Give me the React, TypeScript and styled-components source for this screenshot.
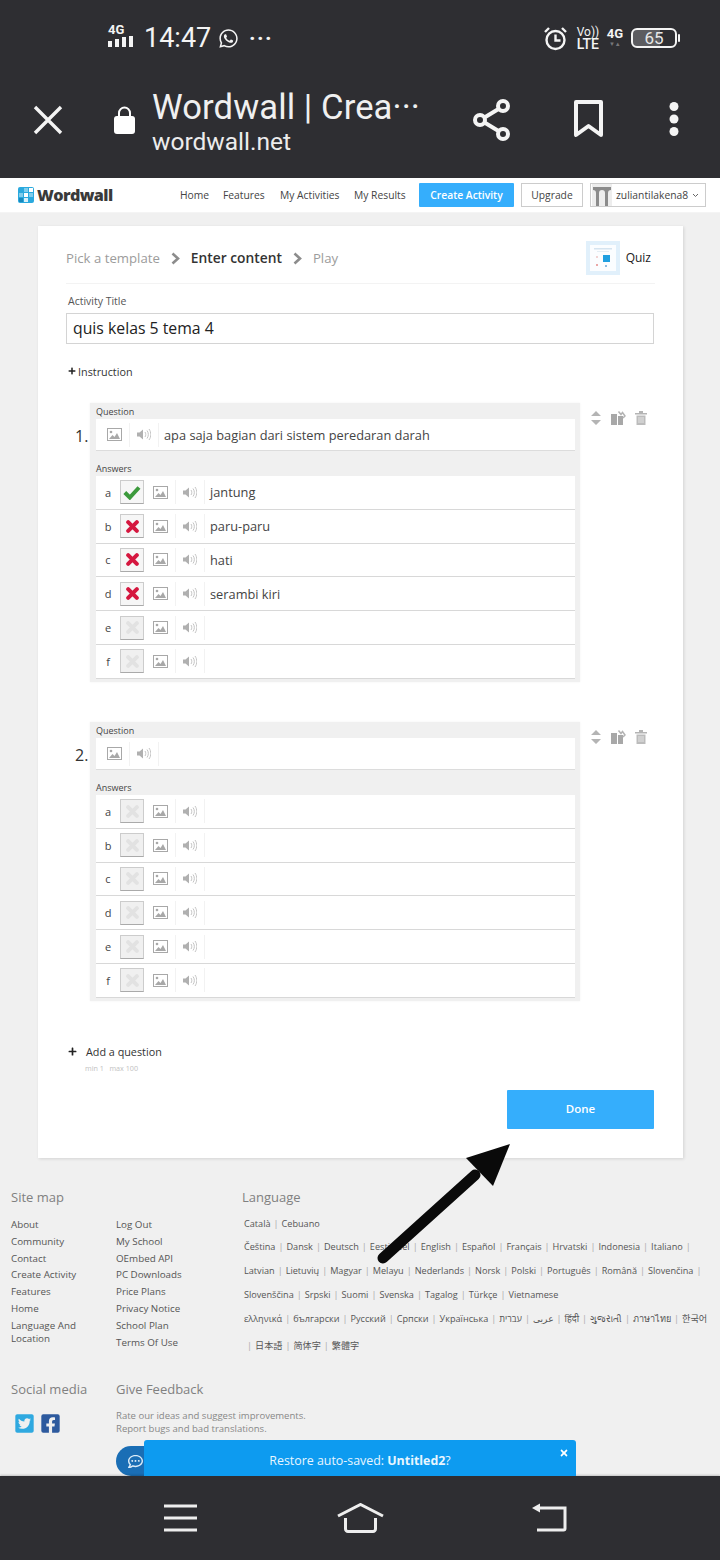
import React from 'react';
import styled, { createGlobalStyle } from 'styled-components';
import { FaTimes, FaWhatsapp, FaTwitterSquare, FaFacebookSquare, FaPlus, FaRegCommentDots } from 'react-icons/fa';

const Global = createGlobalStyle`
  html, body { margin: 0; padding: 0; background: #2e2e32; }
  * { box-sizing: border-box; }
  body { font-family: "Open Sans", "Noto Sans", "Noto Sans CJK JP", "DejaVu Sans", sans-serif; }
`;

const Screen = styled.div`
  position: relative;
  width: 720px;
  height: 1560px;
  overflow: hidden;
  display: flex;
  flex-direction: column;
  background: #f0f0f0;
`;

/* Phone + browser chrome */
const Chrome = styled.header`
  height: 178px;
  flex: none;
  background: #2e2e32;
  color: #f4f4f4;
  font-family: Roboto, "Liberation Sans", sans-serif;
  display: flex;
  flex-direction: column;
`;
const StatusBar = styled.div`
  height: 76px;
  display: flex;
  align-items: center;
  padding: 0 43px 0 108px;
`;
const Signal = styled.div`
  width: 30px;
  display: flex;
  flex-direction: column;
  gap: 0;
  margin-right: 7px;
  margin-top: -6px;
`;
const TinyBold = styled.span`
  font-size: 13px;
  line-height: 13px;
  font-weight: 700;
`;
const Bars = styled.div`
  display: flex;
  gap: 3px;
  align-items: flex-end;
`;
const Bar = styled.i<{ $h: number }>`
  display: block;
  width: 4px;
  height: ${p => p.$h}px;
  background: #f4f4f4;
`;
const Time = styled.span`
  font-size: 27px;
  line-height: 30px;
  width: 74px;
  margin-left: -1px;
`;
const Dots = styled.span`
  font-size: 22px;
  font-weight: 700;
  letter-spacing: 1.4px;
  margin: 0 0 0 10px;
`;
const Spacer = styled.div`
  flex: 1;
`;
const LteStack = styled.div`
  display: flex;
  flex-direction: column;
  align-items: flex-start;
  margin: 0 6px 0 9px;
  width: 24px;
`;
const VoLabel = styled.span`
  font-size: 12px;
  line-height: 12px;
`;
const LteLabel = styled.span`
  font-size: 14px;
  line-height: 13px;
  font-weight: 500;
`;
const NetStack = styled.div`
  display: flex;
  flex-direction: column;
  align-items: center;
  margin-right: 8px;
  margin-top: -2px;
`;
const NetArrows = styled.span`
  font-size: 6px;
  line-height: 7px;
  color: #77777b;
`;
const Battery = styled.div`
  position: relative;
  width: 46px;
  height: 20px;
  border: 2px solid #f4f4f4;
  border-radius: 6px;
  font-size: 17px;
  line-height: 16px;
  text-align: center;
  color: #e8e8e8;
  background: linear-gradient(90deg, #5c5c60 0 65%, transparent 65%);
  &::after {
    content: '';
    position: absolute;
    right: -5px;
    top: 4px;
    width: 2px;
    height: 8px;
    background: #f4f4f4;
    border-radius: 1px;
  }
`;
const BrowserBar = styled.div`
  flex: 1;
  display: flex;
  align-items: flex-start;
  padding: 11px 0 0 32px;
`;
const IconSlot = styled.div<{ $w: number; $top?: number }>`
  width: ${p => p.$w}px;
  flex: none;
  margin-top: ${p => p.$top ?? 16}px;
  display: flex;
`;
const TitleBlock = styled.div`
  width: 321px;
  flex: none;
  font-weight: 300;
`;
const PageTitle = styled.div`
  font-size: 34.6px;
  line-height: 40px;
  font-weight: 400;
  letter-spacing: 0.1px;
  color: #f0f0f0;
  white-space: nowrap;
`;
const PageUrl = styled.div`
  font-size: 24.5px;
  line-height: 30px;
  font-weight: 400;
  color: #ececec;
`;

/* Wordwall nav */
const Nav = styled.nav`
  height: 35px;
  flex: none;
  background: #fff;
  display: flex;
  align-items: center;
  padding: 0 14px 0 18px;
  font-size: 10.3px;
  color: #444;
  border-bottom: 1px solid #f4f4f4;
`;
const Logo = styled.div`
  display: flex;
  align-items: center;
  gap: 3px;
  width: 162px;
  font-weight: 800;
  font-size: 16.2px;
  letter-spacing: -0.6px;
  color: #3a3a3a;
`;
const NavLink = styled.span<{ $w: number }>`
  width: ${p => p.$w}px;
  flex: none;
  white-space: nowrap;
  margin-top: -1px;
`;
const CreateButton = styled.div`
  width: 95px;
  height: 24px;
  flex: none;
  background: #35aefc;
  color: #fff;
  font-weight: 600;
  font-size: 10.3px;
  display: flex;
  align-items: center;
  justify-content: center;
  margin-right: 7px;
  border-radius: 1px;
`;
const UpgradeButton = styled.div`
  width: 62px;
  height: 24px;
  flex: none;
  border: 1px solid #ccc;
  display: flex;
  align-items: center;
  justify-content: center;
  margin-right: 7px;
`;
const UserSelect = styled.div`
  width: 116px;
  height: 24px;
  flex: none;
  border: 1px solid #ccc;
  display: flex;
  align-items: center;
  padding: 0 4px 0 1px;
  gap: 4px;
  font-size: 10.3px;
  white-space: nowrap;
`;

/* Main card */
const Card = styled.main`
  width: 645px;
  height: 932px;
  flex: none;
  margin: 13px 0 0 38px;
  background: #fff;
  padding: 15px 28px 0;
  box-shadow: 1px 1px 3px rgba(0, 0, 0, 0.12);
  display: flex;
  flex-direction: column;
`;
const Steps = styled.div`
  height: 43px;
  flex: none;
  display: flex;
  align-items: flex-start;
  border-bottom: 1px solid #f3f3f3;
`;
const StepTrail = styled.div`
  height: 34px;
  flex: 1;
  display: flex;
  align-items: center;
`;
const Step = styled.span<{ $active?: boolean }>`
  color: ${p => (p.$active ? '#333' : '#9c9c9c')};
  font-weight: ${p => (p.$active ? 600 : 400)};
  font-size: ${p => (p.$active ? 13.8 : 13.2)}px;
  margin-top: ${p => (p.$active ? -1 : 0)}px;
`;
const Chevron = styled.svg`
  margin: 0 11px;
  flex: none;
`;
const TemplateThumb = styled.div`
  width: 34px;
  height: 34px;
  background: #fbfdff;
  border: 4px solid #e1f0fb;
  display: flex;
  align-items: center;
  justify-content: center;
  margin-right: 6px;
`;
const TemplateName = styled.span`
  height: 34px;
  line-height: 34px;
  font-size: 12px;
  color: #222;
  margin-right: 4px;
`;
const FieldLabel = styled.div`
  height: 29px;
  padding: 11px 0 0 2px;
  font-size: 10.5px;
  line-height: 13px;
  color: #555;
  flex: none;
`;
const TitleInput = styled.div`
  height: 31px;
  width: 588px;
  flex: none;
  border: 1px solid #d4d4d4;
  padding: 0 6px;
  font-size: 15.8px;
  line-height: 29px;
  font-weight: 500;
  color: #222;
`;
const AddRow = styled.div<{ $gap: number; $top: number }>`
  height: 16px;
  flex: none;
  display: flex;
  align-items: center;
  gap: ${p => p.$gap}px;
  margin: ${p => p.$top}px 0 0 2px;
  padding-bottom: 2px;
  font-size: 10.8px;
  color: #333;
`;
const QuestionList = styled.div`
  display: flex;
  flex-direction: column;
  gap: 40px;
  margin-top: 23px;
  flex: none;
`;
const Question = styled.section`
  display: flex;
  height: 279px;
`;
const Num = styled.div`
  width: 24px;
  flex: none;
  padding: 21px 0 0 9px;
  font-size: 16px;
  line-height: 24px;
  font-weight: 500;
  color: #333;
`;
const Block = styled.div`
  width: 490px;
  flex: none;
  background: #f0f0f0;
  padding: 0 5px 0 6px;
  box-shadow: 0 0 2px rgba(0, 0, 0, 0.06);
`;
const MiniLabel = styled.div<{ $h: number }>`
  height: ${p => p.$h}px;
  display: flex;
  align-items: flex-end;
  font-size: 9px;
  line-height: 12px;
  padding-bottom: 1px;
  color: #444;
`;
const QuestionInput = styled.div`
  height: 32px;
  background: #fff;
  border-bottom: 1px solid #dcdcdc;
  display: flex;
  align-items: center;
  font-size: 12.8px;
  color: #444;
`;
const AnswerRow = styled.div`
  height: 33.8px;
  background: #fff;
  border-bottom: 1px solid #d8d8d8;
  display: flex;
  align-items: center;
  font-size: 12.8px;
  color: #444;
`;
const Letter = styled.span`
  width: 24px;
  flex: none;
  text-align: center;
  font-size: 11px;
`;
const Toggle = styled.div<{ $state: 'ok' | 'bad' | 'off' }>`
  width: 24px;
  height: 24px;
  flex: none;
  border: 1px solid #ccc;
  border-bottom-color: #aaa;
  background: ${p => (p.$state === 'off' ? '#f0f0f0' : '#f6f6f6')};
  display: flex;
  align-items: center;
  justify-content: center;
  color: ${p => (p.$state === 'ok' ? '#3c9a3c' : p.$state === 'bad' ? '#d5173f' : '#e2e2e2')};
`;
const MediaCell = styled.div<{ $w: number; $shift?: number }>`
  width: ${p => p.$w}px;
  height: 24px;
  flex: none;
  display: flex;
  align-items: center;
  justify-content: center;
  padding-left: ${p => p.$shift ?? 0}px;
  border-right: 1px solid #f2f2f2;
`;
const Answer = styled.span`
  padding-left: 5px;
`;
const QuestionText = styled.span`
  padding-left: 5px;
`;
const Tools = styled.div`
  display: flex;
  gap: 9px;
  padding: 8px 0 0 10px;
  height: 28px;
  align-items: flex-start;
`;
const CountHint = styled.div`
  height: 16px;
  flex: none;
  padding-left: 19px;
  font-size: 7.2px;
  line-height: 16px;
  color: #c2c2c2;
`;
const DoneRow = styled.div`
  margin: 14px 1px 0 0;
  display: flex;
  justify-content: flex-end;
  flex: none;
`;
const DoneButton = styled.div`
  width: 147px;
  height: 39px;
  background: #35aefc;
  color: #fff;
  font-weight: 600;
  font-size: 11.5px;
  display: flex;
  align-items: center;
  justify-content: center;
  padding-bottom: 2px;
  border-radius: 1px;
`;

/* Footer */
const Footer = styled.footer`
  flex: 1;
  min-height: 0;
  padding: 30px 0 0 11px;
  color: #555;
`;
const FooterTop = styled.div`
  display: flex;
  height: 192px;
`;
const LinksColumn = styled.div`
  width: 231px;
  flex: none;
`;
const Heading = styled.div`
  font-size: 13px;
  line-height: 18px;
  color: #808080;
`;
const LinkColumns = styled.div`
  display: flex;
  margin-top: 12px;
`;
const LinkList = styled.div<{ $w: number }>`
  width: ${p => p.$w}px;
  flex: none;
  display: flex;
  flex-direction: column;
  gap: 3.8px;
`;
const FooterLink = styled.span`
  font-size: 9.8px;
  line-height: 13px;
  color: #555;
`;
const LangColumn = styled.div`
  flex: 1;
`;
const LangRows = styled.div`
  display: flex;
  flex-direction: column;
  margin-top: 11px;
`;
const LangRow = styled.div<{ $h: number }>`
  height: ${p => p.$h}px;
  display: flex;
  align-items: flex-start;
  white-space: nowrap;
  font-size: 9.15px;
  line-height: 14px;
  color: #555;
  margin-left: 2px;
`;
const Sep = styled.span`
  color: #aaa;
  margin: 0 3px;
`;
const FooterBottom = styled.div`
  display: flex;
`;
const SocialColumn = styled.div`
  width: 105px;
  flex: none;
`;
const SocialIcons = styled.div`
  display: flex;
  gap: 5px;
  margin: 15px 0 0 3px;
  font-size: 21px;
  line-height: 21px;
`;
const FeedbackColumn = styled.div`
  flex: 1;
`;
const FeedbackText = styled.div`
  margin-top: 11px;
  font-size: 9.55px;
  line-height: 13px;
  color: #888;
`;
const FeedbackPill = styled.div`
  margin-top: 11px;
  width: 70px;
  height: 30px;
  border-radius: 15px;
  background: #1a6eb5;
  color: #dcecf8;
  display: flex;
  align-items: center;
  padding-left: 12px;
  font-size: 15px;
`;

const Toast = styled.div`
  position: absolute;
  left: 144px;
  top: 1440px;
  width: 432px;
  height: 36px;
  background: #0d9bf0;
  color: #e8f6ff;
  border-radius: 3px 3px 0 0;
  font-size: 12.4px;
  display: flex;
  align-items: center;
  justify-content: center;
  padding-top: 4px;
`;
const ToastClose = styled.span`
  position: absolute;
  right: 7px;
  top: 8px;
  font-size: 10px;
  line-height: 10px;
  display: flex;
  color: #fff;
`;
const ArrowOverlay = styled.svg`
  position: absolute;
  left: 370px;
  top: 1135px;
`;
const BottomBar = styled.div`
  height: 84px;
  flex: none;
  position: relative;
  background: #2e2e32;
  display: flex;
  align-items: flex-start;
  padding: 27px 0 0 164px;
  box-shadow: 0 -1px 2px rgba(0, 0, 0, 0.2);
`;
const BarIcon = styled.svg<{ $w: number }>`
  flex: none;
  margin-right: ${p => p.$w}px;
`;

const ImgIcon = ({ c = '#a8a8a8' }: { c?: string }) => (
  <svg width="15" height="13" viewBox="0 0 15 13">
    <rect x="0.5" y="0.5" width="14" height="12" fill="#fff" stroke={c} />
    <circle cx="4" cy="4" r="1.3" fill={c} />
    <path d="M2 11l3.5-4 2 2 2.5-4 3 6z" fill={c} />
  </svg>
);
const SpeakerIcon = () => (
  <svg width="14" height="13" viewBox="0 0 14 13">
    <path d="M0 4.5h2.5L6 1.5v10L2.5 8.5H0z" fill="#b0b0b0" />
    <path d="M8 4c1 1.5 1 3.5 0 5M10 2.5c1.8 2.4 1.8 5.6 0 8M12 1c2.4 3.4 2.4 7.6 0 11" fill="none" stroke="#c4c4c4" />
  </svg>
);
const SortIcon = () => (
  <svg width="12" height="14" viewBox="-1 0 12 14">
    <path d="M5 0l5 5H0zM5 14L0 9h10z" fill="#b4b4b4" />
  </svg>
);
const CopyIcon = () => (
  <svg width="15" height="14" viewBox="0 0 15 14">
    <path d="M0 3h6v11H0zM7 5h5v9H7z" fill="#a8a8a8" />
    <path d="M7.5 0.5l2.5 3 1.5-2 2.5 3.5-2 2" fill="none" stroke="#b4b4b4" strokeWidth="1.5" />
  </svg>
);
const TrashIcon = () => (
  <svg width="12" height="14" viewBox="0 0 12 14">
    <path d="M0 2h12v1.5H0zM4 0h4v2H4z" fill="#b4b4b4" />
    <path d="M1.5 4.5h9V14h-9z" fill="#bcbcbc" />
    <path d="M4 6v6M6 6v6M8 6v6" stroke="#e4e4e4" />
  </svg>
);
const ChevronIcon = () => (
  <Chevron width="9" height="13" viewBox="0 0 9 13">
    <path d="M1.5 1.5L7 6.5l-5.5 5" fill="none" stroke="#8c8c8c" strokeWidth="2.6" />
  </Chevron>
);
const LogoMark = () => (
  <svg width="16" height="16" viewBox="0 0 16 16">
    <rect width="16" height="16" rx="2" fill="#2aa9de" />
    <rect x="1" y="6" width="4" height="4" fill="#7fcdec" />
    <rect x="6" y="1" width="4" height="4" fill="#7fcdec" />
    <rect x="11" y="6" width="4" height="4" fill="#7fcdec" />
    <rect x="6" y="6" width="4" height="4" fill="#fff" />
    <rect x="11" y="1" width="4" height="4" fill="#fff" />
    <rect x="6" y="11" width="4" height="4" fill="#d9f1fa" />
    <rect x="1" y="11" width="4" height="4" fill="#1889bd" />
  </svg>
);
const Avatar = () => (
  <svg width="20" height="22" viewBox="0 0 20 22">
    <rect width="20" height="22" fill="#ededed" />
    <path d="M1 3h18v3c-2 0-3 1-3 3v13h-3V9c0-2-1-3-3-3S7 7 7 9v13H4V9C4 7 3 6 1 6z" fill="#8b8b8b" />
  </svg>
);
const CheckMark = () => (
  <svg width="18" height="15" viewBox="0 0 18 15">
    <path d="M1.8 7.5l5 5L16 2.5" fill="none" stroke="currentColor" strokeWidth="4" />
  </svg>
);
const CrossMark = () => (
  <svg width="13" height="13" viewBox="0 0 15 15">
    <path d="M2.5 2.5l10 10M12.5 2.5l-10 10" fill="none" stroke="currentColor" strokeWidth="4.6" strokeLinecap="round" />
  </svg>
);

type AnswerData = { letter: string; state: 'ok' | 'bad' | 'off'; text?: string };
const q1: AnswerData[] = [
  { letter: 'a', state: 'ok', text: 'jantung' },
  { letter: 'b', state: 'bad', text: 'paru-paru' },
  { letter: 'c', state: 'bad', text: 'hati' },
  { letter: 'd', state: 'bad', text: 'serambi kiri' },
  { letter: 'e', state: 'off' },
  { letter: 'f', state: 'off' },
];
const q2: AnswerData[] = ['a', 'b', 'c', 'd', 'e', 'f'].map(letter => ({ letter, state: 'off' as const }));

const col1 = ['About', 'Community', 'Contact', 'Create Activity', 'Features', 'Home', 'Language And\nLocation'];
const col2 = ['Log Out', 'My School', 'OEmbed API', 'PC Downloads', 'Price Plans', 'Privacy Notice', 'School Plan', 'Terms Of Use'];
const langs: { h: number; items: string[]; lead?: boolean; trail?: boolean }[] = [
  { h: 23, items: ['Català', 'Cebuano'] },
  { h: 24, items: ['Čeština', 'Dansk', 'Deutsch', 'Eesti keel', 'English', 'Español', 'Français', 'Hrvatski', 'Indonesia', 'Italiano'], trail: true },
  { h: 24, items: ['Latvian', 'Lietuvių', 'Magyar', 'Melayu', 'Nederlands', 'Norsk', 'Polski', 'Português', 'Română', 'Slovenčina'], trail: true },
  { h: 24, items: ['Slovenščina', 'Srpski', 'Suomi', 'Svenska', 'Tagalog', 'Türkçe', 'Vietnamese'] },
  { h: 27, items: ['ελληνικά', 'български', 'Русский', 'Српски', 'Українська', 'עברית', 'عربى', 'हिंदी', 'ગુજરાતી', 'ภาษาไทย', '한국어'] },
  { h: 16, items: ['日本語', '简体字', '繁體字'], lead: true },
];

const QuestionCard = ({ n, text, answers }: { n: number; text?: string; answers: AnswerData[] }) => (
  <Question>
    <Num>{n}.</Num>
    <Block>
      <MiniLabel $h={16}>Question</MiniLabel>
      <QuestionInput>
        <MediaCell $w={34} $shift={4}><ImgIcon /></MediaCell>
        <MediaCell $w={29}><SpeakerIcon /></MediaCell>
        {text && <QuestionText>{text}</QuestionText>}
      </QuestionInput>
      <MiniLabel $h={25}>Answers</MiniLabel>
      {answers.map(a => (
        <AnswerRow key={a.letter}>
          <Letter>{a.letter}</Letter>
          <Toggle $state={a.state}>{a.state === 'ok' ? <CheckMark /> : <CrossMark />}</Toggle>
          <MediaCell $w={32} $shift={1}><ImgIcon /></MediaCell>
          <MediaCell $w={29}><SpeakerIcon /></MediaCell>
          {a.text && <Answer>{a.text}</Answer>}
        </AnswerRow>
      ))}
    </Block>
    <Tools>
      <SortIcon />
      <CopyIcon />
      <TrashIcon />
    </Tools>
  </Question>
);

export default function App() {
  return (
    <Screen>
      <Global />
      <Chrome>
        <StatusBar>
          <Signal>
            <TinyBold>4G</TinyBold>
            <Bars>
              <Bar $h={6} /><Bar $h={8} /><Bar $h={10} /><Bar $h={11} />
            </Bars>
          </Signal>
          <Time>14:47</Time>
          <FaWhatsapp size={21} />
          <Dots>···</Dots>
          <Spacer />
          <svg width="25" height="25" viewBox="0 0 25 25" fill="none" stroke="#f4f4f4" strokeWidth="2.4">
            <circle cx="12.5" cy="14" r="9" />
            <path d="M12.5 8.5V14.5H17.5M2 6l4-4M23 6l-4-4" />
          </svg>
          <LteStack>
            <VoLabel>Vo))</VoLabel>
            <LteLabel>LTE</LteLabel>
          </LteStack>
          <NetStack>
            <TinyBold>4G</TinyBold>
            <NetArrows>▼▲</NetArrows>
          </NetStack>
          <Battery>65</Battery>
        </StatusBar>
        <BrowserBar>
          <IconSlot $w={82} $top={17}>
            <svg width="32" height="32" viewBox="0 0 32 32" stroke="#f4f4f4" strokeWidth="3.4">
              <path d="M3 3l26 26M29 3L3 29" />
            </svg>
          </IconSlot>
          <IconSlot $w={38} $top={19}>
            <svg width="21" height="28" viewBox="0 0 21 28">
              <rect x="0" y="10" width="21" height="18" rx="3" fill="#fff" />
              <path d="M5 11V7a5.5 5.5 0 0 1 11 0v4" fill="none" stroke="#fff" strokeWidth="2" />
            </svg>
          </IconSlot>
          <TitleBlock>
            <PageTitle>Wordwall | Crea···</PageTitle>
            <PageUrl>wordwall.net</PageUrl>
          </TitleBlock>
          <IconSlot $w={101} $top={12}>
            <svg width="38" height="42" viewBox="0 0 38 42" fill="none" stroke="#f4f4f4" strokeWidth="4">
              <circle cx="7" cy="21" r="5" />
              <circle cx="30" cy="7" r="5" />
              <circle cx="30" cy="35" r="5" />
              <path d="M11.5 18.5l14-8.5M11.5 23.5l14 8.5" />
            </svg>
          </IconSlot>
          <IconSlot $w={95} $top={13}>
            <svg width="29" height="38" viewBox="0 0 29 38" fill="none" stroke="#f4f4f4" strokeWidth="4">
              <path d="M2 2h25v33L14.5 26 2 35z" strokeLinejoin="round" />
            </svg>
          </IconSlot>
          <IconSlot $w={12} $top={15}>
            <svg width="10" height="34" viewBox="0 0 10 34" fill="#f4f4f4">
              <circle cx="5" cy="4.5" r="4.5" />
              <circle cx="5" cy="17" r="4.5" />
              <circle cx="5" cy="29.5" r="4.5" />
            </svg>
          </IconSlot>
        </BrowserBar>
      </Chrome>

      <Nav>
        <Logo><LogoMark />Wordwall</Logo>
        <NavLink $w={43}>Home</NavLink>
        <NavLink $w={57}>Features</NavLink>
        <NavLink $w={74}>My Activities</NavLink>
        <NavLink $w={65}>My Results</NavLink>
        <CreateButton>Create Activity</CreateButton>
        <UpgradeButton>Upgrade</UpgradeButton>
        <UserSelect>
          <Avatar />
          zuliantilakena8
          <svg width="7" height="5" viewBox="0 0 7 5" fill="none" stroke="#666">
            <path d="M1 1l2.5 2.5L6 1" />
          </svg>
        </UserSelect>
      </Nav>

      <Card>
        <Steps>
          <StepTrail>
            <Step>Pick a template</Step>
            <ChevronIcon />
            <Step $active>Enter content</Step>
            <ChevronIcon />
            <Step>Play</Step>
          </StepTrail>
          <TemplateThumb>
            <svg width="24" height="24" viewBox="0 0 24 24">
              <rect x="3" y="2" width="18" height="1.5" fill="#d5e4f0" />
              <rect x="6" y="5" width="12" height="1" fill="#e4edf4" />
              <rect x="12" y="9" width="7" height="7" fill="#1f9fe0" />
              <circle cx="6" cy="11" r="1" fill="#edc4c4" />
              <circle cx="6" cy="19" r="1" fill="#e58a8a" />
              <circle cx="15" cy="20" r="1" fill="#6aa7d8" />
            </svg>
          </TemplateThumb>
          <TemplateName>Quiz</TemplateName>
        </Steps>
        <FieldLabel>Activity Title</FieldLabel>
        <TitleInput>quis kelas 5 tema 4</TitleInput>
        <AddRow $gap={2} $top={20}>
          <FaPlus size={8} color="#222" />
          Instruction
        </AddRow>
        <QuestionList>
          <QuestionCard n={1} text="apa saja bagian dari sistem peredaran darah" answers={q1} />
          <QuestionCard n={2} answers={q2} />
        </QuestionList>
        <AddRow $gap={9} $top={43}>
          <FaPlus size={9} color="#222" />
          Add a question
        </AddRow>
        <CountHint>min 1 &nbsp; max 100</CountHint>
        <DoneRow>
          <DoneButton>Done</DoneButton>
        </DoneRow>
      </Card>

      <Footer>
        <FooterTop>
          <LinksColumn>
            <Heading>Site map</Heading>
            <LinkColumns>
              <LinkList $w={105}>
                {col1.map(l => (
                  <FooterLink key={l}>
                    {l.split('\n').map((part, i) => (
                      <React.Fragment key={part}>
                        {i > 0 && <br />}
                        {part}
                      </React.Fragment>
                    ))}
                  </FooterLink>
                ))}
              </LinkList>
              <LinkList $w={105}>
                {col2.map(l => <FooterLink key={l}>{l}</FooterLink>)}
              </LinkList>
            </LinkColumns>
          </LinksColumn>
          <LangColumn>
            <Heading>Language</Heading>
            <LangRows>
              {langs.map(row => (
                <LangRow key={row.items[0]} $h={row.h}>
                  {row.lead && <Sep>|</Sep>}
                  {row.items.map((it, i) => (
                    <React.Fragment key={it}>
                      {i > 0 && <Sep>|</Sep>}
                      {it}
                    </React.Fragment>
                  ))}
                  {row.trail && <Sep>|</Sep>}
                </LangRow>
              ))}
            </LangRows>
          </LangColumn>
        </FooterTop>
        <FooterBottom>
          <SocialColumn>
            <Heading>Social media</Heading>
            <SocialIcons>
              <FaTwitterSquare color="#2fa9e0" />
              <FaFacebookSquare color="#2d5a9e" />
            </SocialIcons>
          </SocialColumn>
          <FeedbackColumn>
            <Heading>Give Feedback</Heading>
            <FeedbackText>
              Rate our ideas and suggest improvements.<br />
              Report bugs and bad translations.
            </FeedbackText>
            <FeedbackPill><FaRegCommentDots /></FeedbackPill>
          </FeedbackColumn>
        </FooterBottom>
      </Footer>

      <BottomBar>
        <BarIcon $w={140} width="33" height="30" viewBox="0 0 33 30" stroke="#eee" strokeWidth="3">
          <path d="M0 3h33M0 15h33M0 27h33" />
        </BarIcon>
        <BarIcon $w={147} width="48" height="30" viewBox="0 0 48 30" fill="none" stroke="#eee" strokeWidth="3">
          <path d="M1 13L23.5 1.5 46 13" />
          <path d="M8.5 15v11a2.5 2.5 0 0 0 2.5 2.5h25a2.5 2.5 0 0 0 2.5-2.5V15" />
        </BarIcon>
        <BarIcon $w={0} width="35" height="30" viewBox="0 0 35 30" fill="none" stroke="#eee" strokeWidth="3">
          <path d="M6 5h27v20.5a1.5 1.5 0 0 1-1.5 1.5H5" />
          <path d="M0 5l8-4.5v9z" fill="#eee" stroke="none" />
        </BarIcon>
      </BottomBar>

      <Toast>
        <span>Restore auto-saved: <b>Untitled2</b>?</span>
        <ToastClose><FaTimes /></ToastClose>
      </Toast>

      <ArrowOverlay width="150" height="130" viewBox="0 0 150 130">
        <path d="M13 123L105 40" stroke="#0a0a0a" strokeWidth="11" strokeLinecap="round" />
        <path d="M140 9L96 23l27 28z" fill="#0a0a0a" />
      </ArrowOverlay>
    </Screen>
  );
}
